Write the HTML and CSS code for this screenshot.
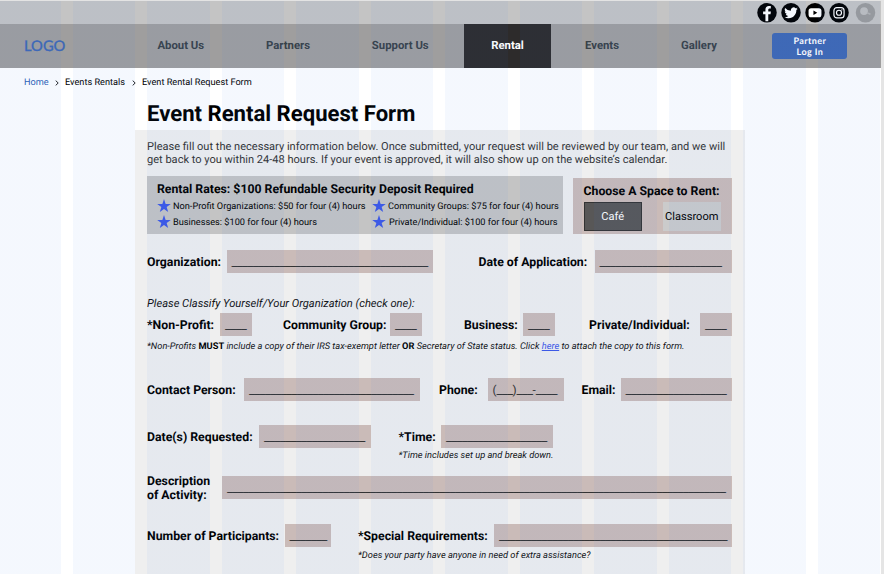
FILE: index.html
```html
<!DOCTYPE html>
<html lang="en">
<head>
<meta charset="utf-8">
<title>Event Rental Request Form</title>
<link rel="stylesheet" href="styles.css">
</head>
<body>
<div class="page">
  <div class="topbar">
    <svg class="social" viewBox="0 0 20 20"><circle cx="10" cy="10" r="10"/><path fill="#fff" d="M8.400 18.800V11.600H6V8.600h2.400V6.700c0-2.500 1.400-3.700 3.500-3.700 1 0 2 .1 2 .1v2.500h-1.200c-1 0-1.400.6-1.400 1.300v1.700H14l-.4 3h-2.300v7.200z"/></svg>
    <svg class="social" viewBox="0 0 20 20"><circle cx="10" cy="10" r="10"/><path fill="#fff" transform="translate(3.200 3) scale(.58)" d="M23.600 4.900a9.700 9.700 0 0 1-2.800.8 4.900 4.900 0 0 0 2.200-2.700 9.700 9.700 0 0 1-3.100 1.200A4.900 4.900 0 0 0 11.500 8.600 13.900 13.900 0 0 1 1.400 3.500a4.900 4.900 0 0 0 1.500 6.500 4.900 4.900 0 0 1-2.200-.6 4.900 4.900 0 0 0 3.900 4.900 4.900 4.900 0 0 1-2.200.1 4.900 4.900 0 0 0 4.600 3.400A9.900 9.900 0 0 1-.2 19.800 13.900 13.900 0 0 0 7.300 22c9.100 0 14.200-7.700 13.900-14.600a10 10 0 0 0 2.400-2.500z"/></svg>
    <svg class="social" viewBox="0 0 20 20"><circle cx="10" cy="10" r="10"/><rect x="3.400" y="5.300" width="13.200" height="9.400" rx="2.600" fill="#fff"/><path d="M8.400 7.800v4.400l4-2.200z"/></svg>
    <svg class="social" viewBox="0 0 20 20"><circle cx="10" cy="10" r="10"/><g fill="none" stroke="#fff" stroke-width="1.200"><rect x="4.800" y="4.800" width="10.400" height="10.400" rx="3"/><circle cx="10" cy="10" r="2.600"/></g><circle cx="13" cy="7" r=".7" fill="#fff"/></svg>
    <svg class="social search" viewBox="0 0 20 20"><circle cx="10" cy="10" r="10" fill="#9b9b9b"/><circle cx="8.500" cy="8.300" r="4" fill="#bfbfbf"/><path d="M11.500 10l3.600 1.500" stroke="#b3b3b3" stroke-width="1.600"/></svg>
  </div>
  <nav class="nav">
    <a class="logo">LOGO</a>
    <a class="item">About Us</a>
    <a class="item">Partners</a>
    <a class="item">Support Us</a>
    <a class="item active">Rental</a>
    <a class="item">Events</a>
    <a class="item">Gallery</a>
    <a class="login">Partner<br>Log In</a>
  </nav>
  <div class="crumbs">
    <a class="home">Home</a>
    <svg class="chev" viewBox="0 0 4 6"><path d="M.7.6 3.200 3 .7 5.400"/></svg>
    <span class="c2">Events Rentals</span>
    <svg class="chev" viewBox="0 0 4 6"><path d="M.7.6 3.200 3 .7 5.400"/></svg>
    <span class="c3">Event Rental Request Form</span>
  </div>
  <h1>Event Rental Request Form</h1>
  <main class="form">
    <p class="intro"><span class="i1">Please fill out the necessary information below. Once submitted, your request will be reviewed by our team, and we will</span><br><span class="i2">get back to you within 24-48 hours. If your event is approved, it will also show up on the website’s calendar.</span></p>
    <div class="boxes">
      <section class="rates">
        <h2>Rental Rates: $100 Refundable Security Deposit Required</h2>
        <ul>
          <li><svg class="star" viewBox="0 0 24 23"><path d="M12 0l2.900 8.700H24l-7.300 5.400L19.400 23 12 17.600 4.600 23l2.700-8.900L0 8.700h9.100z"/></svg><span>Non-Profit Organizations: $50 for four (4) hours</span></li>
          <li><svg class="star" viewBox="0 0 24 23"><path d="M12 0l2.900 8.700H24l-7.300 5.400L19.400 23 12 17.600 4.600 23l2.700-8.900L0 8.700h9.100z"/></svg><span>Community Groups: $75 for four (4) hours</span></li>
          <li><svg class="star" viewBox="0 0 24 23"><path d="M12 0l2.900 8.700H24l-7.300 5.400L19.400 23 12 17.600 4.600 23l2.700-8.900L0 8.700h9.100z"/></svg><span>Businesses: $100 for four (4) hours</span></li>
          <li class="private"><svg class="star" viewBox="0 0 24 23"><path d="M12 0l2.900 8.700H24l-7.300 5.400L19.400 23 12 17.600 4.600 23l2.700-8.900L0 8.700h9.100z"/></svg><span>Private/Individual: $100 for four (4) hours</span></li>
        </ul>
      </section>
      <section class="choose">
        <h2>Choose A Space to Rent:</h2>
        <div class="opts"><button class="cafe">Café</button><button class="classroom">Classroom</button></div>
      </section>
    </div>
    <div class="row r-org"><label>Organization:</label><span class="in">_____________________________________</span><label>Date of Application:</label><span class="in">_______________________</span></div>
    <p class="classify"><span>Please Classify Yourself/Your Organization (check one):</span></p>
    <div class="row r-class"><label>*Non-Profit:</label><span class="in">____</span><label>Community Group:</label><span class="in">____</span><label>Business:</label><span class="in">____</span><label>Private/Individual:</label><span class="in">____</span></div>
    <p class="note n1"><span>*Non-Profits <b>MUST</b> include a copy of their IRS tax-exempt letter <b>OR</b> Secretary of State status. Click <a>here</a> to attach the copy to this form.</span></p>
    <div class="row r-contact"><label>Contact Person:</label><span class="in">_______________________________</span><label>Phone:</label><span class="in"><i>(</i>___<i>)</i>___<i>-</i>____</span><label>Email:</label><span class="in">___________________</span></div>
    <div class="row r-date"><label>Date(s) Requested:</label><span class="in">___________________</span><label>*Time:</label><span class="in">___________________</span></div>
    <p class="note n2"><span>*Time includes set up and break down.</span></p>
    <div class="row r-desc"><label>Description<br>of Activity:</label><span class="in">______________________________________________________________________________________________</span></div>
    <div class="row r-num"><label>Number of Participants:</label><span class="in">_______</span><label>*Special Requirements:</label><span class="in">___________________________________________</span></div>
    <p class="note n3"><span>*Does your party have anyone in need of extra assistance?</span></p>
  </main>
  <div class="columns"></div>
</div>
</body>
</html>
```
FILE: styles.css
```css
* { box-sizing: border-box; }
body { margin: 0; background: #e5e5e5; font-family: Roboto, "Liberation Sans", sans-serif; color: #000; text-rendering: geometricPrecision; }
.page { position: relative; width: 881px; height: 574px; overflow: hidden; background: #fff; border-top: 1px solid #e3e3e3; }
.columns { position: absolute; inset: 0; pointer-events: none; background: repeating-linear-gradient(90deg, rgba(50,120,235,.05) 0 62.100px, transparent 62.100px 74.500px); background-position: -1.500px 0; background-size: 900px 100%; }
.topbar { height: 23px; background: #c4c4c4; display: flex; justify-content: flex-end; align-items: center; gap: 4.200px; padding: 1px 5.200px 0 0; }
.social { width: 20px; height: 19.500px; }
.search { width: 21px; margin-left: 1.500px; }
.nav { height: 43.500px; background: #9f9e9e; display: grid; grid-template-columns: 122px 117.500px 97px 127.500px 87px 102px 92px 1fr; }
.nav a { display: flex; align-items: center; justify-content: center; }
.nav .item { font-size: 11.350px; font-weight: 700; color: #384148; padding-bottom: 1px; }
.nav .active { background: #2d2b2b; color: #fff; }
.nav .logo { justify-content: flex-start; padding-left: 24px; font: 500 14.700px Lato, sans-serif; color: #3e68b5; -webkit-text-stroke: .25px #3e68b5; }
.nav .login { display: block; width: 75px; height: 26.500px; margin: 8.500px 0 0 27.400px; padding-top: 2px; border-radius: 3px; background: #3f68b4; color: #fff; font: 700 9px/11px Lato, sans-serif; letter-spacing: .4px; text-align: center; }
.crumbs { height: 30px; padding: 0 0 0 24px; display: flex; align-items: center; font-size: 9.180px; }
.home { width: 31px; color: #2d5fb5; }
.chev { width: 4px; height: 6px; fill: none; stroke: #222; stroke-width: 1; }
.c2 { width: 67px; margin-left: 6px; }
.c3 { margin-left: 6px; }
h1 { margin: 0 0 0 147px; height: 32.500px; font-size: 22.100px; line-height: 32.500px; font-weight: 700; white-space: nowrap; }
p { margin: 0; white-space: nowrap; }
.form { width: 609.500px; height: 460px; margin-left: 135px; padding: 10px 12.500px 0 12px; background: #efefef; }
.intro { height: 36.500px; font-size: 11.050px; line-height: 13px; color: #333; }
.boxes { display: flex; justify-content: space-between; align-items: flex-end; height: 57.500px; }
.rates { width: 416px; height: 58px; background: #c4c4c4; padding: 6px 0 0 10px; }
h2 { margin: 0; font-size: 12.270px; line-height: 15px; font-weight: 700; white-space: nowrap; }
ul { list-style: none; margin: 1.500px 0 0; padding: 0; display: grid; grid-template-columns: 215px 1fr; font-size: 9.200px; line-height: 16.300px; }
li { display: flex; align-items: center; white-space: nowrap; }
.star { width: 14px; height: 13px; margin: -2.500px 2px 0 0; fill: #3d58e6; }
.private .star { margin-right: 3px; }
.choose { width: 159.500px; height: 56px; background: #cabbb8; padding: 6px 11px 0; }
.opts { display: flex; justify-content: space-between; margin-top: 3px; }
button { font: 400 11.080px Roboto, sans-serif; text-rendering: geometricPrecision; width: 58.500px; height: 29px; padding: 0; border: 0; }
.cafe { background: #585757; color: #fff; border: 1px solid #333; }
.classroom { background: #cbcbcb; color: #000; }
.row { display: grid; height: 23px; align-items: stretch; }
label { font-size: 12.270px; font-weight: 700; line-height: 14px; align-self: center; white-space: nowrap; }
.in { display: block; background: #cabbb8; height: 23px; padding-left: 5px; font-size: 11.750px; line-height: 24.500px; color: #333; white-space: nowrap; overflow: hidden; text-shadow: .7px 0 #333; }
.in i { font-style: normal; text-shadow: none; }
.r-org { margin-top: 16px; grid-template-columns: 79.500px 252px 116px 137.500px; }
.r-org .in:nth-of-type(1) { width: 206.500px; }
.classify { height: 40px; padding-top: 22.600px; font-size: 11.150px; line-height: 16px; font-style: italic; color: #111; }
.r-class { grid-template-columns: 73px 63px 107px 74px 59px 66px 111px 32px; }
.r-class .in { width: 32px; }
.note { font-size: 9.280px; line-height: 12px; font-style: italic; color: #111; }
.n1 { height: 42px; padding-top: 5px; }
.n1 a { color: #3d58e6; text-decoration: underline; }
.n1 b { font-style: normal; color: #000; }
.r-contact { grid-template-columns: 97px 195px 48.500px 94px 39px 111.500px; }
.r-contact .in:nth-of-type(1) { width: 176px; }
.r-contact .in:nth-of-type(2) { width: 76px; }
.r-date { margin-top: 24px; grid-template-columns: 112px 139.500px 42.500px 111.500px; }
.r-date .in:nth-of-type(1) { width: 112px; }
.n2 { height: 28px; padding: 2px 0 0 251.500px; }
.r-desc { grid-template-columns: 75px 510px; }
.r-desc label { margin-top: -2px; }
.r-num { margin-top: 25px; grid-template-columns: 137.500px 73.500px 136px 238px; }
.r-num .in:nth-of-type(1) { width: 46.500px; }
.n3 { padding: 3px 0 0 211px; }
```
